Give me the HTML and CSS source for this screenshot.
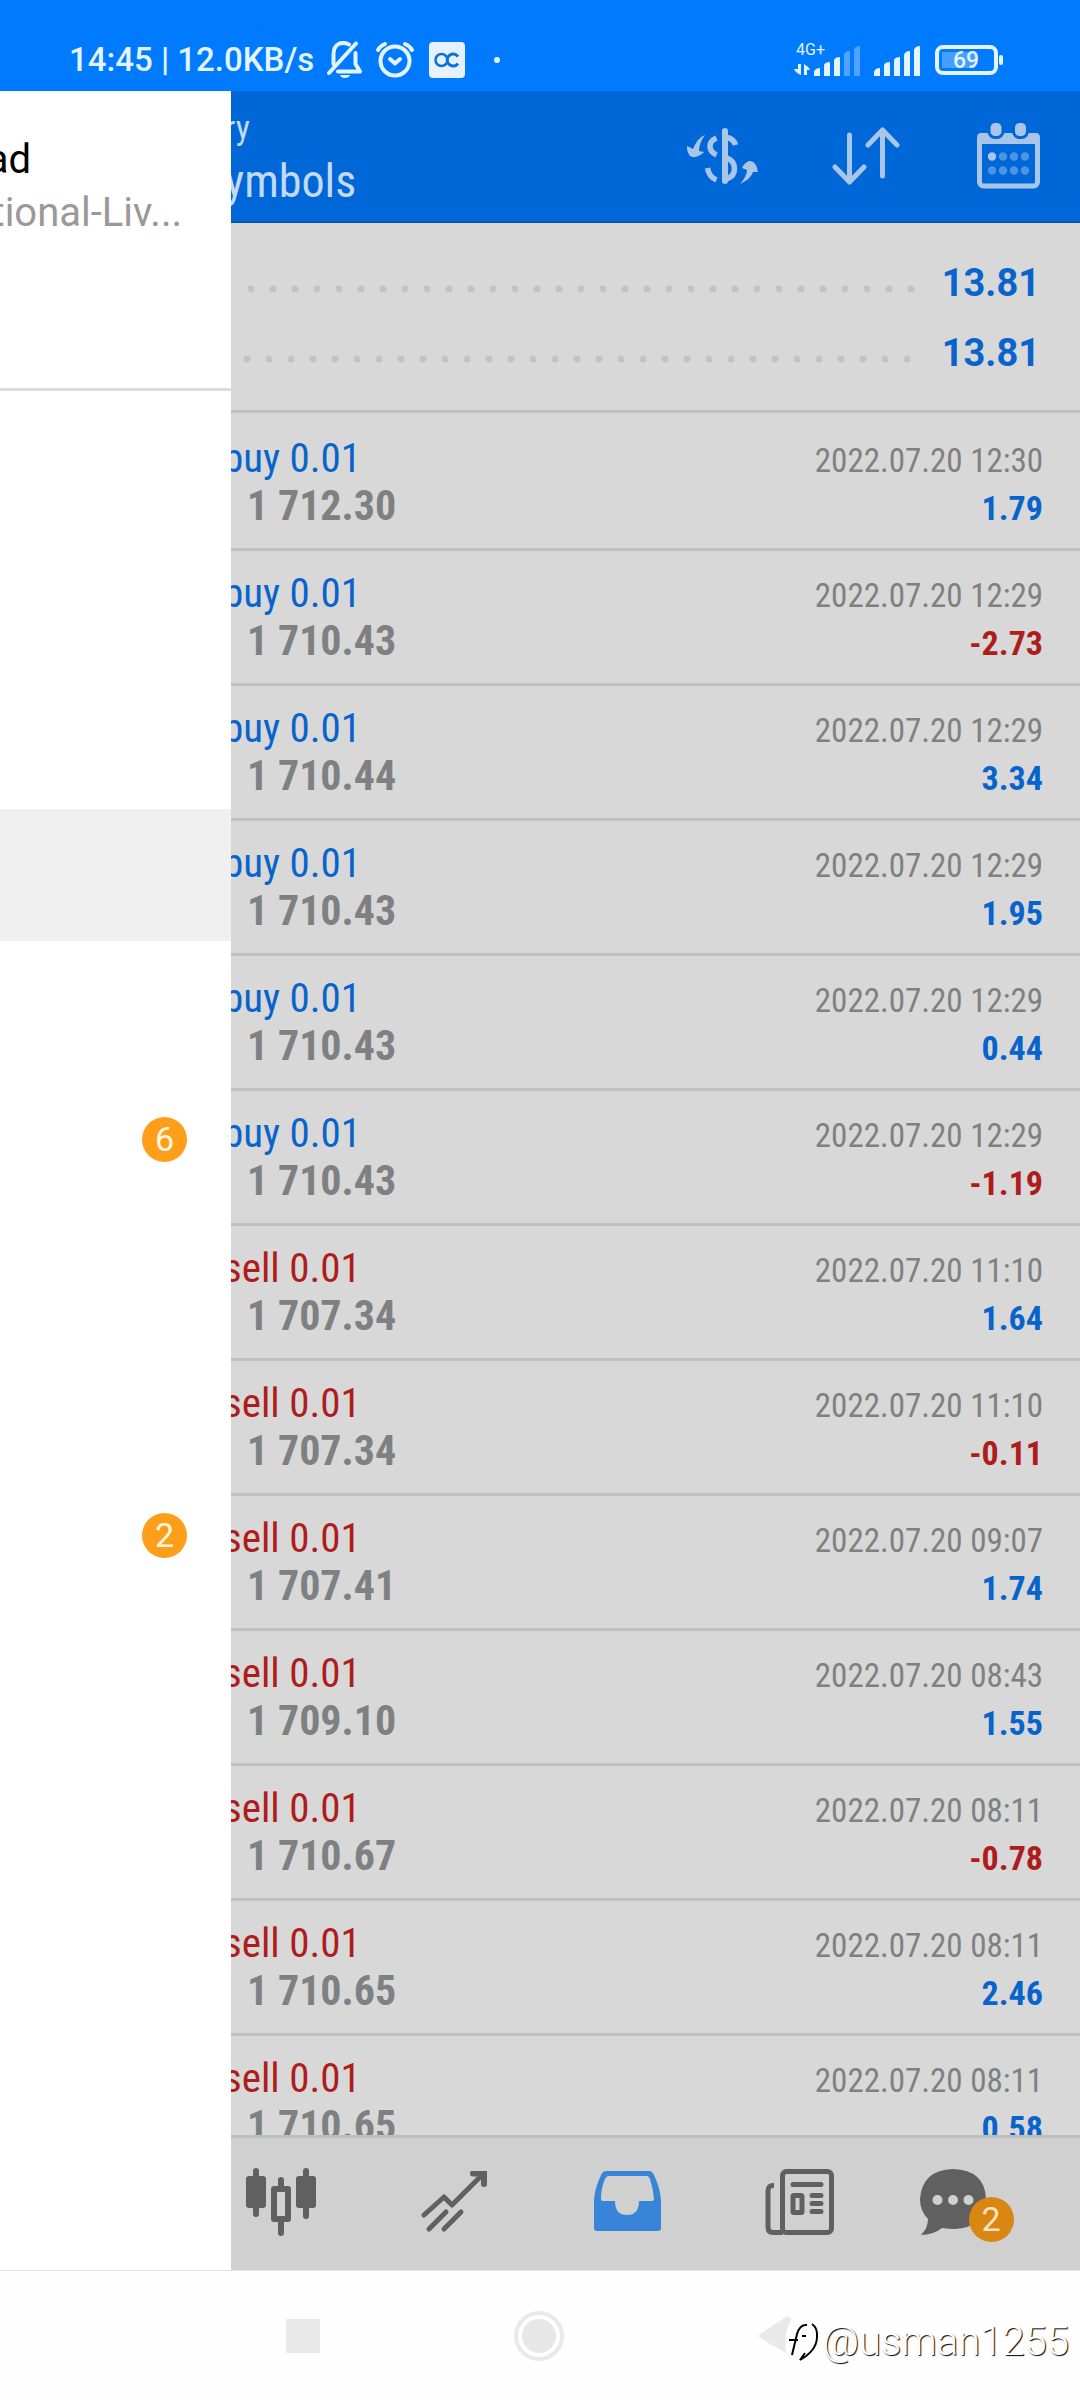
FILE: index.html
```html
<!DOCTYPE html>
<html lang="en">
<head>
<meta charset="utf-8">
<meta name="viewport" content="width=device-width, initial-scale=1">
<title>History</title>
<link rel="stylesheet" href="styles.css">
</head>
<body>
<header class="status">
  <span class="status-text">14:45 | 12.0KB/s</span>
  <svg class="bell" width="36" height="38" viewBox="327 41 36 38" fill="none" stroke="currentColor" stroke-width="4" stroke-linecap="round" stroke-linejoin="round"><path d="M329 73 356 43.500"/><path d="M333.500 64V55C333.500 42 343 41.500 349 44.500M355.500 53V64L360 71.500H338"/><path d="M340 75H350Q349 78 345 78Q341 78 340 75Z" fill="currentColor" stroke="none"/></svg>
  <svg class="alarm" width="40" height="38" viewBox="375 40 40 38" fill="none" stroke="currentColor" stroke-width="4" stroke-linecap="round" stroke-linejoin="round"><circle cx="395" cy="60" r="14.500"/><path d="M390 58 395 62.500 400 58M378 49Q380 45 385 43M412 49Q410 45 405 43"/></svg>
  <svg class="app-mark" width="36" height="36" viewBox="0 0 36 36"><rect width="36" height="36" rx="4" fill="#e6f1ff"/><circle cx="12.500" cy="18" r="6" fill="none" stroke="#0a72dc" stroke-width="2.500"/><path d="M29 14.500A6 6 0 1 0 29 21.500" fill="none" stroke="#0a72dc" stroke-width="3"/></svg>
  <i class="dot"></i>
  <svg class="signals" width="210" height="42" viewBox="794 38 210 42" fill="currentColor">
    <text x="796" y="54" class="net">4G+</text>
    <path d="M798 63H801V74Q796 72 794 68H798ZM804 63Q808 65 810 69H807V74H804Z"/>
    <path d="M814 75V71Q815 67 820 67V75ZM824 75V64Q825 61 830 61V75ZM834 75V59Q835 56 840 56V75Z"/>
    <path opacity=".35" d="M844 75V54Q845 50 850 50V75ZM854 75V49Q855 45 860 45V75Z"/>
    <path d="M874 75V71Q875 67 880 67V75ZM884 75V64Q885 61 890 61V75ZM894 75V59Q895 56 900 56V75ZM904 75V54Q905 50 910 50V75ZM914 75V49Q915 45 920 45V75Z"/>
    <rect x="942" y="51" width="33" height="16" opacity=".3"/>
    <rect x="937" y="46" width="59" height="26" rx="6" fill="none" stroke="currentColor" stroke-width="4"/>
    <rect x="999" y="54" width="4" height="10" rx="2"/>
    <text x="966" y="67" class="charge">69</text>
  </svg>
</header>

<div class="app">
  <main class="screen">
    <header class="bar">
      <h1 class="title"><small>ry</small>ymbols</h1>
      <button class="tool" aria-label="Deal currency"><svg width="72" height="57" viewBox="687 127 72 57" fill="none" stroke="currentColor" stroke-width="5.500"><path d="M725 130V180" stroke-linecap="round" stroke-width="6"/><path d="M716.500 137Q710 140 710 145Q710 151 716.500 154M727 136.500Q734 138 735.500 144M727 157Q734.500 160 734.500 168Q734.500 175 727 178M716.500 179Q709 176 707.500 167"/><path d="M705 134Q698 136 693 148L687 145Q686 149 690 155Q695 158 702 153L704 151L699 150Q699 142 705 134ZM740 183Q747 175 747 169L742 167Q744 162 749 160Q756 159 758 171L753 171Q751 178 740 183Z" fill="currentColor" stroke="none"/></svg></button>
      <button class="tool" aria-label="Sort"><svg width="68" height="60" viewBox="831 127 68 60" fill="none" stroke="currentColor" stroke-width="5" stroke-linecap="round" stroke-linejoin="round"><path d="M848.500 136V183M834 168 848.500 183 863 168M881.500 177V131M867 146 881.500 131 896 146"/></svg></button>
      <button class="tool" aria-label="Period"><svg width="64" height="66" viewBox="977 123 64 66"><rect x="979.500" y="138" width="58" height="48" rx="4" fill="none" stroke="currentColor" stroke-width="5"/><path d="M977 144V138Q977 133 981 133H1036Q1040 133 1040 138V144Z" fill="currentColor"/><g fill="currentColor" stroke="#0067d8" stroke-width="3"><rect x="989" y="121.500" width="14" height="16" rx="6"/><rect x="1013.500" y="121.500" width="14" height="16" rx="6"/></g><g fill="#4d94e3"><circle cx="992" cy="156.500" r="4.200" fill="currentColor"/><circle cx="1003" cy="156.500" r="4.200"/><circle cx="1014" cy="156.500" r="4.200"/><circle cx="1025" cy="156.500" r="4.200"/><circle cx="992" cy="170.500" r="4.200"/><circle cx="1003" cy="170.500" r="4.200"/><circle cx="1014" cy="170.500" r="4.200"/><circle cx="1025" cy="170.500" r="4.200"/></g></svg></button>
    </header>
    <section class="summary">
      <div class="total"><i class="leader"></i><b>13.81</b></div>
      <div class="total shifted"><i class="leader"></i><b>13.81</b></div>
    </section>
    <ul class="deals">
      <li class="deal"><span class="side">buy 0.01</span><time>2022.07.20 12:30</time><b class="price">1 712.30</b><b class="profit">1.79</b></li>
      <li class="deal"><span class="side">buy 0.01</span><time>2022.07.20 12:29</time><b class="price">1 710.43</b><b class="profit loss">-2.73</b></li>
      <li class="deal"><span class="side">buy 0.01</span><time>2022.07.20 12:29</time><b class="price">1 710.44</b><b class="profit">3.34</b></li>
      <li class="deal"><span class="side">buy 0.01</span><time>2022.07.20 12:29</time><b class="price">1 710.43</b><b class="profit">1.95</b></li>
      <li class="deal"><span class="side">buy 0.01</span><time>2022.07.20 12:29</time><b class="price">1 710.43</b><b class="profit">0.44</b></li>
      <li class="deal"><span class="side">buy 0.01</span><time>2022.07.20 12:29</time><b class="price">1 710.43</b><b class="profit loss">-1.19</b></li>
      <li class="deal"><span class="side sell">sell 0.01</span><time>2022.07.20 11:10</time><b class="price">1 707.34</b><b class="profit">1.64</b></li>
      <li class="deal"><span class="side sell">sell 0.01</span><time>2022.07.20 11:10</time><b class="price">1 707.34</b><b class="profit loss">-0.11</b></li>
      <li class="deal"><span class="side sell">sell 0.01</span><time>2022.07.20 09:07</time><b class="price">1 707.41</b><b class="profit">1.74</b></li>
      <li class="deal"><span class="side sell">sell 0.01</span><time>2022.07.20 08:43</time><b class="price">1 709.10</b><b class="profit">1.55</b></li>
      <li class="deal"><span class="side sell">sell 0.01</span><time>2022.07.20 08:11</time><b class="price">1 710.67</b><b class="profit loss">-0.78</b></li>
      <li class="deal"><span class="side sell">sell 0.01</span><time>2022.07.20 08:11</time><b class="price">1 710.65</b><b class="profit">2.46</b></li>
      <li class="deal"><span class="side sell">sell 0.01</span><time>2022.07.20 08:11</time><b class="price">1 710.65</b><b class="profit">0.58</b></li>
    </ul>
    <nav class="tabs">
      <button class="tab" aria-label="Charts"><svg width="70" height="68" viewBox="246 168 70 68" fill="currentColor"><rect x="246" y="176" width="20" height="32" rx="3"/><rect x="253" y="168" width="6" height="49" rx="3"/><rect x="296" y="176" width="20" height="32" rx="3"/><rect x="303" y="168" width="6" height="51" rx="3"/><path d="M278 186V180Q278 177 281 177Q284 177 284 180V186H288Q291 186 291 189V219Q291 222 288 222H284V233Q284 236 281 236Q278 236 278 233V222H274Q271 222 271 219V189Q271 186 274 186ZM277 192V216H285V192Z" fill-rule="evenodd"/></svg></button>
      <button class="tab" aria-label="Trade"><svg width="66" height="62" viewBox="421 171 66 62" fill="none" stroke="currentColor" stroke-width="5"><path d="M424 215 444 197 452 205 483 174" stroke-linecap="round" stroke-linejoin="round"/><path d="M473 173.500H484V184" stroke-width="6" stroke-linecap="round"/><path d="M429 229 446 212M444 229 461 212" stroke-linecap="round"/></svg></button>
      <button class="tab active" aria-label="History"><svg width="68" height="62" viewBox="593 171 68 62"><path d="M606 171H649Q652 171 654 175Q661 190 661 202V228Q661 231 658 231H597Q594 231 594 228V202Q594 190 601 175Q603 171 606 171ZM608 176Q606 177 605 179Q601 188 601 199Q601 201 603 201H615Q615 215 627 215Q639 215 639 201H652Q654 201 654 199Q653 188 650 179Q649 176 647 176Z" fill="currentColor" fill-rule="evenodd"/></svg></button>
      <button class="tab" aria-label="News"><svg width="70" height="66" viewBox="766 168 70 66" fill="none" stroke="currentColor" stroke-width="5"><rect x="783.500" y="170.500" width="49" height="61" rx="4"/><path d="M775 184.500Q769 184 769 190V226Q769 231.500 774 231.500H784"/><path d="M794 183.500H822M813 194.500H822M813 202.500H822M813 210.500H822" stroke-linecap="round"/><rect x="794" y="194.500" width="9" height="17" rx="1"/></svg></button>
      <button class="tab chat" aria-label="Messages, 2 new"><svg width="66" height="66" viewBox="920 168 66 66"><path d="M953 168Q985 169 986 198Q984 227 955 228Q948 228 942 227Q933 234 921 234Q928 227 928 218Q920 210 920 198Q922 169 953 168Z" fill="currentColor"/><g fill="#d0d0d0"><circle cx="937.500" cy="199" r="5"/><circle cx="953" cy="199" r="5"/><circle cx="968.500" cy="199" r="5"/></g></svg><span class="badge over">2</span></button>
    </nav>
  </main>

  <aside class="drawer">
    <div class="account"><p class="name">ad</p><p class="server">tional-Liv...</p></div>
    <ul class="menu">
      <li></li><li></li><li></li><li class="current"></li><li></li>
      <li><span class="badge">6</span></li><li></li><li></li>
      <li><span class="badge">2</span></li>
    </ul>
  </aside>
</div>

<footer class="system">
  <button aria-label="Recent apps"><i class="square"></i></button>
  <button aria-label="Home"><svg width="52" height="52" viewBox="0 0 52 52"><circle cx="26" cy="26" r="23" fill="none" stroke="#e9e9e9" stroke-width="4"/><circle cx="26" cy="26" r="17" fill="#e7e7e7"/></svg></button>
  <button aria-label="Back"><svg width="36" height="42" viewBox="0 0 36 42"><path d="M2 19 28 2Q33 0 33 5Q26 16 28 38L2 23Q0 21 2 19Z" fill="#e9e9e9"/></svg></button>
  <span class="watermark"><svg width="34" height="44" viewBox="790 2324 34 44" fill="none"><path d="M792 2344H801M795 2359 800 2338Q803 2328 810 2329M805 2340H809M808 2357 803 2364Q819 2355 820 2342Q821 2332 815 2328" stroke="#000" stroke-width="2"/></svg>@usman1255</span>
</footer>
</body>
</html>
```
FILE: styles.css
```css
* { box-sizing: border-box; }

body {
  margin: 0;
  height: 100vh;
  display: flex;
  flex-direction: column;
  font-family: "Roboto Condensed", Roboto, sans-serif;
  background: #fefefe;
  overflow: hidden;
}

h1, p, ul { margin: 0; padding: 0; list-style: none; font-weight: 400; }
svg { display: block; flex: none; }
button { border: 0; padding: 0; background: none; color: inherit; display: flex; align-items: center; justify-content: center; }

/* system status bar */
.status {
  flex: none;
  height: 91px;
  padding: 28px 76px 0 69px;
  display: flex;
  align-items: center;
  background: #007aff;
  color: #e3f4ff;
  font-family: Roboto, sans-serif;
}
.status-text { font-size: 33px; line-height: 40px; font-weight: 500; margin-right: 13px; white-space: nowrap; }
.alarm { margin-left: 12px; }
.app-mark { margin-left: 14px; }
.dot { width: 6px; height: 6px; border-radius: 50%; background: currentColor; margin-left: 29px; }
.signals { margin-left: auto; }
.net { font-size: 16px; }
.charge { font-size: 23px; font-weight: 500; text-anchor: middle; }

.app { flex: 1; min-height: 0; position: relative; display: flex; }
.screen { flex: 1; min-width: 0; display: flex; flex-direction: column; background: #d8d8d8; }

/* toolbar */
.bar {
  flex: none;
  height: 132px;
  display: flex;
  background: #0067d8;
  border-bottom: 2px solid #0a58b4;
  color: #a9c5e8;
}
.title { flex: 1; padding: 16px 0 0 225px; font-size: 46px; line-height: 68px; color: #c2daf6; white-space: nowrap; }
.title small { display: block; font-size: 34px; line-height: 40px; }
.tool { width: 143px; }

/* totals */
.summary { flex: none; height: 190px; padding: 25px 40px 0 0; border-bottom: 3px solid #c0c0c0; }
.total { display: flex; align-items: center; height: 70px; padding-left: 247px; gap: 26px; font-family: Roboto, sans-serif; font-size: 38px; color: #0864cc; }
.shifted { padding-left: 243px; gap: 30px; }
.leader { flex: 1; height: 8px; margin-top: 12px; background: radial-gradient(circle at 4px 4px, #c2c2c2 3px, transparent 4px) 0 0 / 22px 8px; }

/* closed deals */
.deals { flex: 1; min-height: 0; overflow: hidden; padding-top: 3px; }
.deal {
  height: 135px;
  padding: 17px 37px 0 223px;
  display: grid;
  grid-template-columns: 1fr auto;
  grid-auto-rows: 48px;
  align-items: baseline;
  font-size: 42px;
  line-height: 50px;
  border-bottom: 3px solid #c0c0c0;
  color: #7f8081;
  white-space: nowrap;
}
.side { color: #0864cc; font-size: 41px; }
.sell { color: #ae1c1c; }
.price { padding-left: 24px; }
.deal time { font-size: 33px; text-align: right; }
.profit { font-size: 34px; text-align: right; color: #0864cc; }
.loss { color: #ae1c1c; }

/* bottom tabs */
.tabs { flex: none; height: 135px; padding: 0 21px 5px 194px; display: flex; background: #d0d0d0; border-top: 3px solid #bebebe; color: #606060; }
.tab { flex: 1; position: relative; }
.active { color: #3784d8; }
.chat svg { margin-right: 40px; }
.badge { width: 45px; height: 45px; border-radius: 50%; background: #ff9e18; color: #fff8e0; font: 34px/45px Roboto, sans-serif; text-align: center; }
.over { position: absolute; left: 50%; top: 59px; margin-left: -4px; background: #d98612; color: #fbe4bd; }

/* side drawer, half way through its slide */
.drawer { position: absolute; left: 0; top: 0; bottom: 0; width: 231px; background: #fff; overflow: hidden; }
.account { height: 300px; padding-top: 42px; border-bottom: 3px solid #dadada; font-family: Roboto, sans-serif; display: flex; flex-direction: column; align-items: flex-end; white-space: nowrap; }
.name { font-size: 40px; line-height: 54px; padding-right: 200px; color: #000; }
.server { font-size: 40px; line-height: 52px; padding-right: 49px; color: #999; }
.menu { padding-top: 22px; }
.menu li { height: 132px; padding-right: 44px; display: flex; align-items: center; justify-content: flex-end; }
.menu .current { background: #f0f0f0; }

/* system navigation */
.system { flex: none; height: 130px; position: relative; display: flex; justify-content: center; gap: 193px; border-top: 1px solid #e4e4e4; }
.square { width: 34px; height: 34px; background: #e8e8e8; }
.watermark { position: absolute; right: 11px; top: 47px; display: flex; align-items: center; gap: 2px; font: 300 40px/48px Roboto, sans-serif; color: #fff; text-shadow: 1px 1px 1px #000; }
```
